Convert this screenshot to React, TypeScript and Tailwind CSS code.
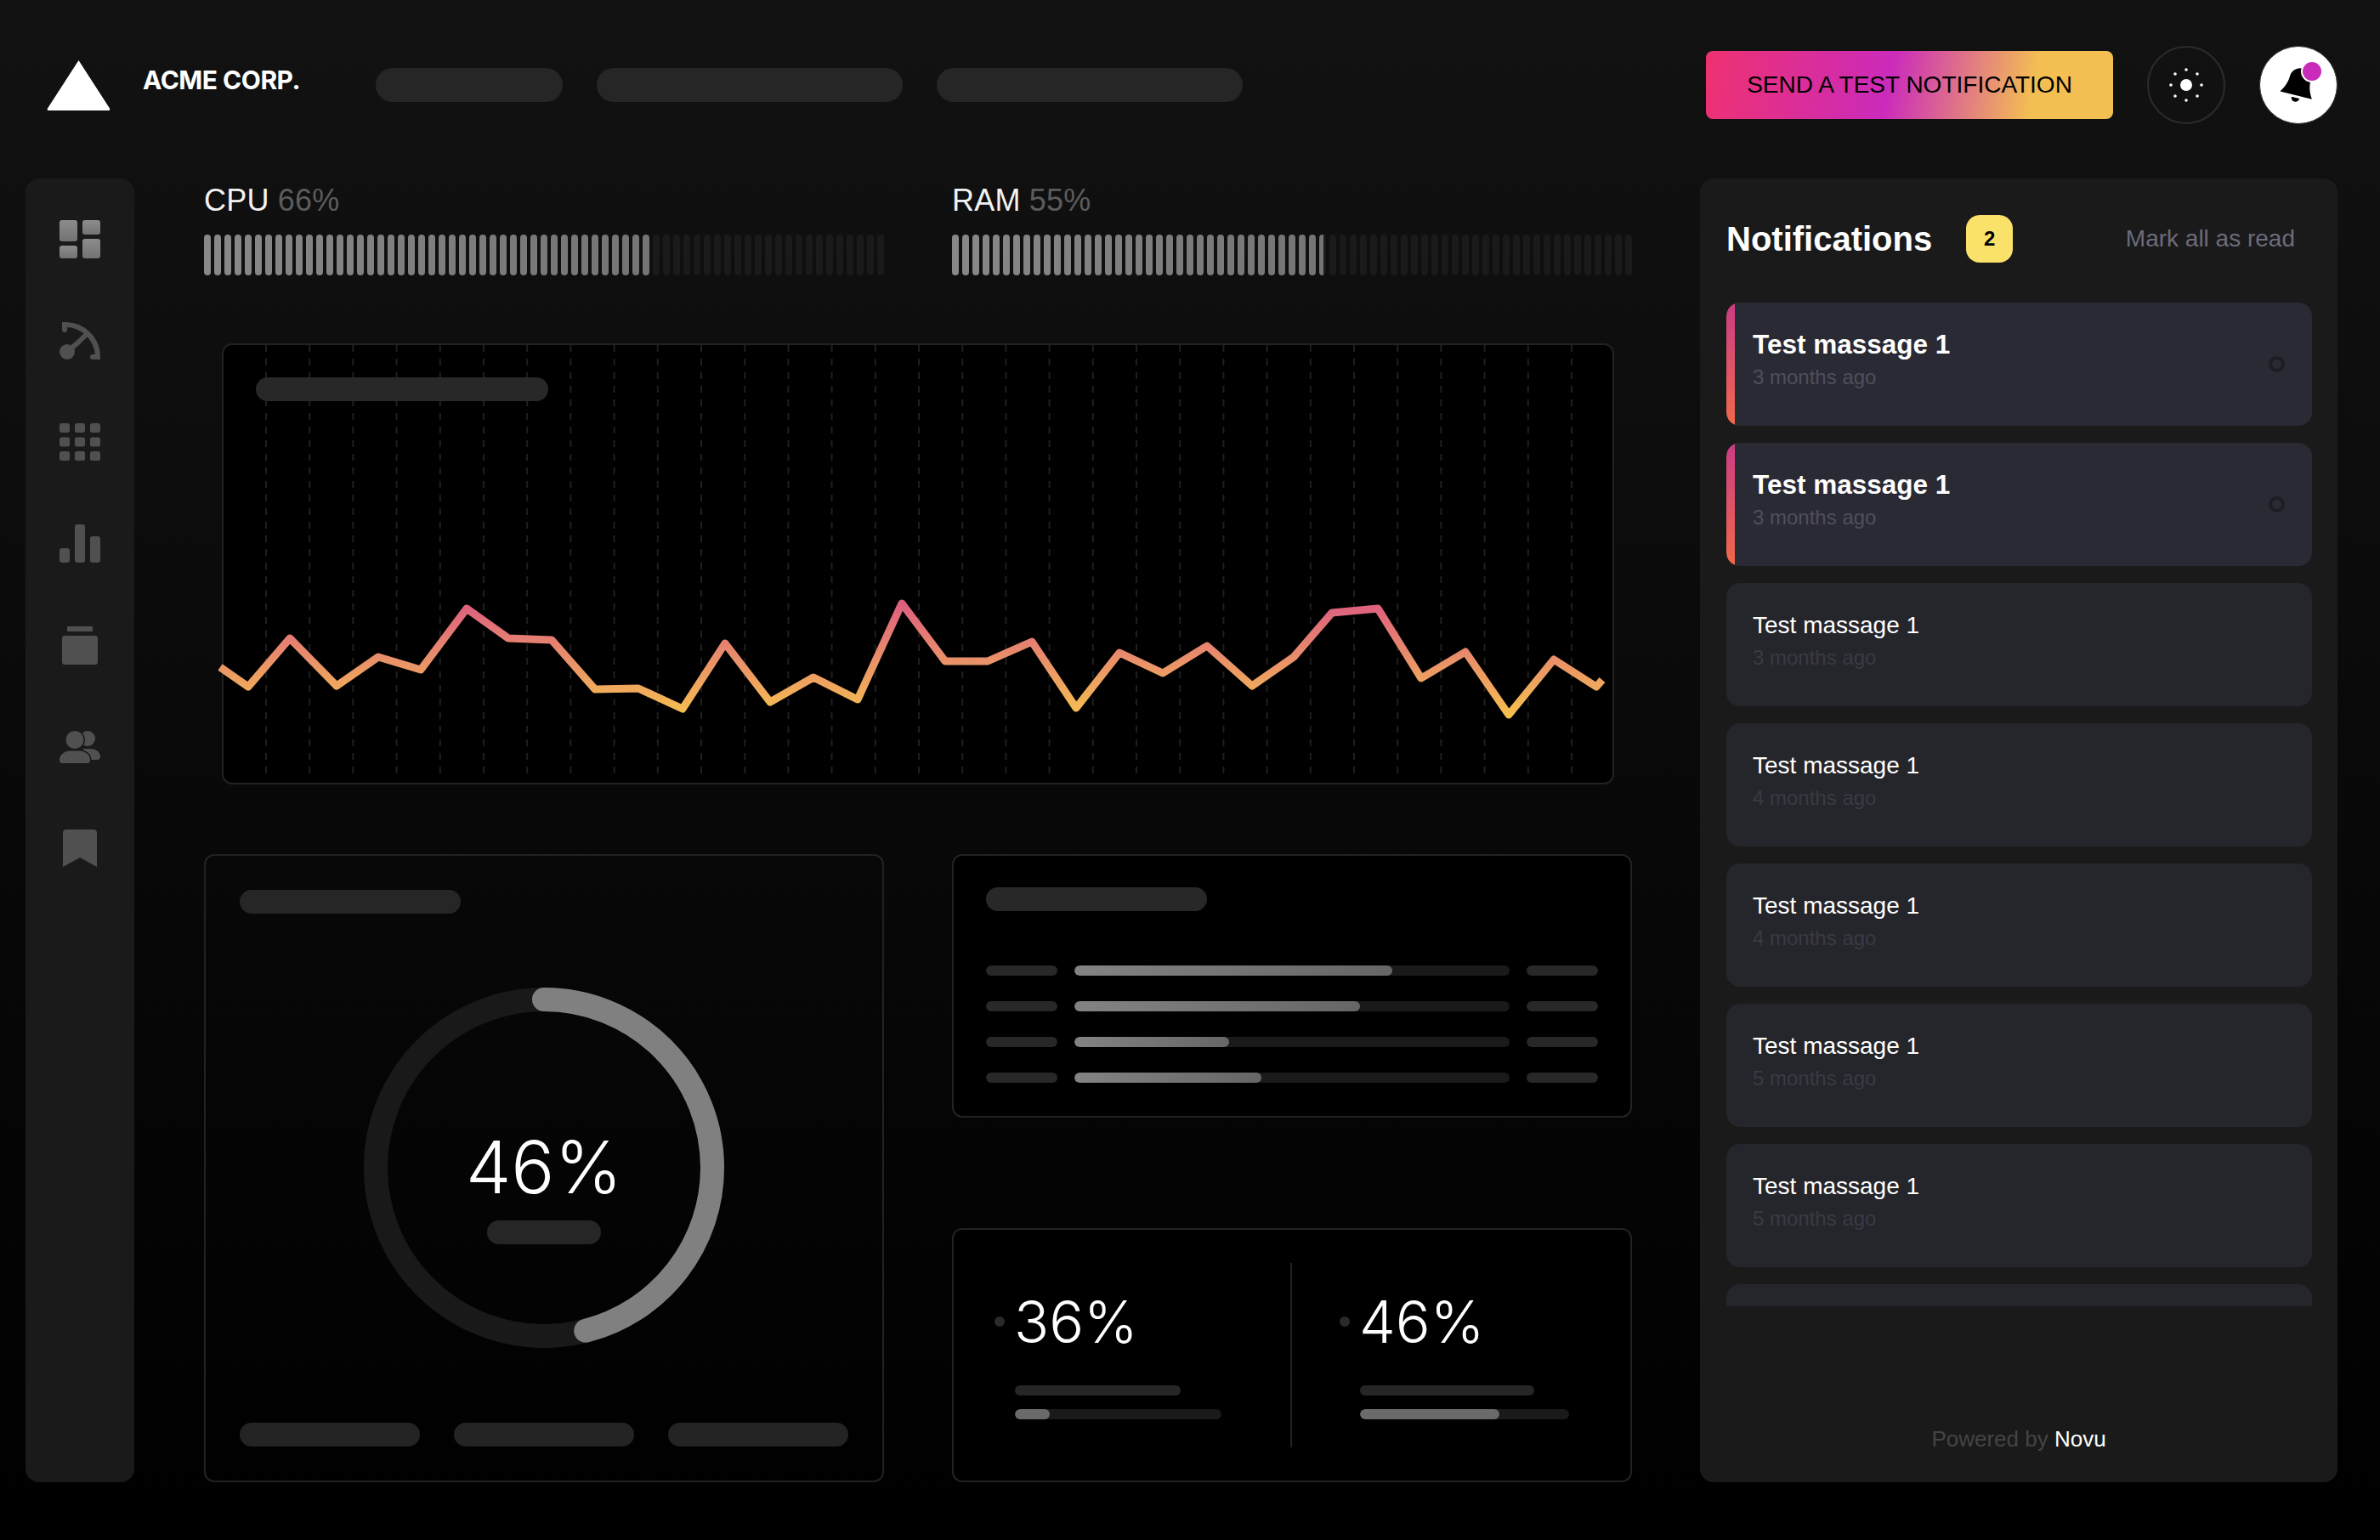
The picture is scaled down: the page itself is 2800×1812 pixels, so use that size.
import { ReactNode } from 'react';

const linePoints =
  '259,785 292,808 341,751 396,807 445,773 495,788 549,716 598,751 649,753 700,811 751,810 803,834 853,757 906,826 957,797 1009,823 1061,710 1112,778 1162,778 1214,755 1266,833 1317,768 1368,792 1420,760 1473,807 1522,773 1567,721 1621,716 1672,798 1724,767 1775,841 1828,776 1878,808 1885,800';

const rows = [73, 65.6, 35.5, 43];

const notifications = [
  { time: '3 months ago', unread: true },
  { time: '3 months ago', unread: true },
  { time: '3 months ago', unread: false },
  { time: '4 months ago', unread: false },
  { time: '4 months ago', unread: false },
  { time: '5 months ago', unread: false },
  { time: '5 months ago', unread: false },
];

// fillPx: how far the grey fill reaches along the strip, it can stop inside a tick
function Ticks({ fillPx }: { fillPx: number }) {
  const ticks = 67;
  return (
    <div className="flex gap-1 h-12 mt-5">
      {Array.from({ length: ticks }, (_, i) => {
        const width = Math.max(0, Math.min(8, fillPx - i * 12));
        const shade = Math.round(0x88 - ((i * 12) / fillPx) * 0x14);
        return (
          <div key={i} className="w-2 h-12 rounded-full bg-[#1a1a1a] overflow-hidden">
            {width > 0 && <div className="h-full" style={{ width, backgroundColor: `rgb(${shade},${shade},${shade})` }} />}
          </div>
        );
      })}
    </div>
  );
}

function Meter({ label, percent, fillPx }: { label: string; percent: number; fillPx: number }) {
  return (
    <div className="w-[800px]">
      <div className="text-[36px] leading-10 mt-[6px] tracking-[0.2px] text-[#f2f2f2]">
        {label} <span className="text-[#5c5c5c]">{percent}%</span>
      </div>
      <Ticks fillPx={fillPx} />
    </div>
  );
}

function SidebarIcons() {
  return (
    <div className="flex flex-col items-center gap-[75px] pt-[49px]">
      <svg width="48" height="45" viewBox="0 0 48 45">
        <defs>
          <linearGradient id="dash" x1="0" y1="0" x2="0" y2="1">
            <stop offset="0" stopColor="#8c8c8c" />
            <stop offset="1" stopColor="#737373" />
          </linearGradient>
        </defs>
        <g fill="url(#dash)">
          <rect x="0" y="0" width="21" height="25" rx="3" />
          <rect x="27" y="0" width="21" height="17" rx="3" />
          <rect x="0" y="30" width="21" height="15" rx="3" />
          <rect x="27" y="22" width="21" height="23" rx="3" />
        </g>
      </svg>
      <svg width="48" height="44" viewBox="0 0 48 44" fill="none" stroke="#505050" strokeWidth="6" strokeLinecap="round">
        <path d="M6 9V3A38 38 0 0 1 45 41H39" />
        <path d="M26 20 31 15" />
        <path d="M9 35 23 23" />
        <circle cx="9" cy="35" r="9" fill="#505050" stroke="none" />
      </svg>
      <svg width="48" height="44" viewBox="0 0 48 44" fill="#505050">
        {[0, 16.500, 33].map((y) =>
          [0, 18, 36].map((x) => <rect key={`${x}-${y}`} x={x} y={y} width="12" height="11" rx="2.500" />),
        )}
      </svg>
      <svg width="48" height="45" viewBox="0 0 48 45" fill="#505050">
        <rect x="0" y="28" width="12" height="17" rx="3" />
        <rect x="18" y="0" width="12" height="45" rx="3" />
        <rect x="36" y="14" width="12" height="31" rx="3" />
      </svg>
      <svg width="42" height="45" viewBox="0 0 42 45" fill="#505050">
        <rect x="6" y="0" width="30" height="6" />
        <rect x="0" y="11" width="42" height="34" rx="3" />
      </svg>
      <svg className="mt-[3px]" width="48" height="38" viewBox="0 0 48 38" fill="#505050">
        <circle cx="33" cy="9" r="9" />
        <path d="M28 21h8c7 0 12 4 12 9 0 3-2 4-4 4H30z" />
        <circle cx="18" cy="10.500" r="10.500" stroke="#1a1a1a" strokeWidth="3" paintOrder="stroke" />
        <path d="M0 34c0-6 6-10.500 13-10.500h10c7 0 13 4.500 13 10.500 0 3-1.500 4-3 4H3c-1.500 0-3-1-3-4z" stroke="#1a1a1a" strokeWidth="3" paintOrder="stroke" />
      </svg>
      <svg className="mt-[3px]" width="40" height="44" viewBox="0 0 40 44" fill="#505050">
        <path d="M0 4a4 4 0 0 1 4-4h32a4 4 0 0 1 4 4v40L20 33 0 44z" />
      </svg>
    </div>
  );
}

function SunIcon() {
  const dots: [number, number][] = [
    [0, -18], [13, -13], [18, 0], [13, 13], [0, 18], [-13, 13], [-18, 0], [-13, -13],
  ];
  return (
    <svg width="48" height="48" viewBox="-24 -24 48 48" fill="#fff">
      <circle r="7" />
      {dots.map(([x, y]) => (
        <circle key={`${x}-${y}`} cx={x} cy={y} r="1.800" />
      ))}
    </svg>
  );
}

function BellIcon() {
  return (
    <svg className="absolute left-[22px] top-[22px] rotate-[14deg]" width="46" height="48" viewBox="0 0 24 25" fill="#000">
      <path d="M12 1.500a6.500 6.500 0 0 0-6.500 6.500c0 6-3.500 10-3.500 10.500h20c0-.5-3.500-4.500-3.500-10.500A6.500 6.500 0 0 0 12 1.500z" />
      <path d="M9.500 20a2.500 2.500 0 0 0 5 0z" />
    </svg>
  );
}

function Card({ className, children }: { className: string; children: ReactNode }) {
  return <div className={`border-2 border-[#222222] rounded-xl ${className}`}>{children}</div>;
}

function StatColumn({ value, fill, pillW, barW, className }: { value: string; fill: number; pillW: string; barW: string; className: string }) {
  return (
    <div className={className}>
      <div className="flex items-center gap-[11px] mt-[33px]">
        <div className="w-3 h-3 rounded-full bg-[#2a2a2a]" />
        <div className="text-[68px] leading-[72px] text-white font-light [font-family:Inter,sans-serif]">{value}</div>
      </div>
      <div className={`ml-6 mt-[39px] h-3 rounded-full bg-[#262626] ${pillW}`} />
      <div className={`ml-6 mt-4 h-3 rounded-full bg-[#1a1a1a] overflow-hidden ${barW}`}>
        <div className="h-full rounded-full bg-[#6a6a6a]" style={{ width: `${fill}%` }} />
      </div>
    </div>
  );
}

export default function App() {
  return (
    <div className="w-[2800px] h-[1812px] overflow-hidden bg-[linear-gradient(180deg,#121212,#000000)] [font-family:'Liberation_Sans',Arial,sans-serif]">
      {/* top bar */}
      <header className="h-[200px] flex items-center pl-[55px] pr-[50px]">
        <div className="w-[387px] flex items-center gap-[38px]">
          <svg width="75" height="60" viewBox="0 0 75 60" fill="#fff">
            <path d="M37.500 1 74 57.500a1.500 1.500 0 0 1-1 2.500H2a1.500 1.500 0 0 1-1-2.500z" />
          </svg>
          <span className="text-[30px] leading-none font-bold text-white mb-3 tracking-[-0.5px] [font-family:Inter,sans-serif]">ACME CORP.</span>
        </div>
        <div className="flex gap-10">
          <div className="w-[220px] h-10 rounded-full bg-[#262626]" />
          <div className="w-[360px] h-10 rounded-full bg-[#262626]" />
          <div className="w-[360px] h-10 rounded-full bg-[#262626]" />
        </div>
        <button className="ml-auto w-[479px] h-20 rounded-lg text-[28px] text-black bg-[linear-gradient(100deg,#ee3170_0%,#cb2bbb_45%,#f4bf52_80%)]">
          SEND A TEST NOTIFICATION
        </button>
        <div className="ml-10 w-[92px] h-[92px] rounded-full border-2 border-[#2b2b2b] flex items-center justify-center">
          <SunIcon />
        </div>
        <div className="relative ml-10 w-[92px] h-[92px] rounded-full bg-white border border-[#333333]">
          <BellIcon />
          <div className="absolute left-12 top-4 w-[26px] h-[26px] rounded-full bg-[#cb2bbb] border-2 border-white" />
        </div>
      </header>

      <div className="flex mt-[10px] pl-[30px] h-[1534px]">
        <aside className="w-32 rounded-2xl bg-[#1a1a1a]">
          <SidebarIcons />
        </aside>

        <main className="w-[1680px] ml-[82px] mr-[80px] flex flex-col">
          <div className="flex justify-between">
            <Meter label="CPU" percent={66} fillPx={524} />
            <Meter label="RAM" percent={55} fillPx={436.700} />
          </div>

          <Card className="relative mt-20 mx-[21px] h-[519px] bg-black">
            <svg className="absolute inset-0 overflow-visible" width="1635" height="515" viewBox="263 406 1635 515" fill="none">
              <defs>
                <linearGradient id="line" gradientUnits="userSpaceOnUse" x1="0" y1="710" x2="0" y2="842">
                  <stop offset="0" stopColor="#de5f80" />
                  <stop offset="0.5" stopColor="#e9906a" />
                  <stop offset="1" stopColor="#f6c04f" />
                </linearGradient>
              </defs>
              {Array.from({ length: 31 }, (_, i) => (
                <line key={i} x1={313 + i * 51.2} x2={313 + i * 51.2} y1="406" y2="916" stroke="#1f1f1f" strokeWidth="2" strokeDasharray="8 8" />
              ))}
              <polyline points={linePoints} stroke="url(#line)" strokeWidth="9" strokeLinejoin="round" />
            </svg>
            <div className="relative ml-[38px] mt-[38px] w-[344px] h-7 rounded-full bg-[#282828]" />
          </Card>

          <div className="grid grid-cols-2 gap-x-20 mt-[82px] h-[739px]">
            <Card className="p-10 flex flex-col">
              <div className="w-[260px] h-7 rounded-full bg-[#262626]" />
              <div className="relative self-center w-[424px] h-[424px] mt-[87px] flex flex-col items-center pt-[168px]">
                <svg className="absolute inset-0 -rotate-90" width="424" height="424" viewBox="0 0 424 424" fill="none" strokeWidth="28">
                  <circle cx="212" cy="212" r="198" stroke="#191919" />
                  <circle cx="212" cy="212" r="198" stroke="#808080" strokeLinecap="round" pathLength="100" strokeDasharray="46 100" />
                </svg>
                <div className="text-[85px] leading-[88px] text-white font-light [font-family:Inter,sans-serif]">46%</div>
                <div className="mt-[18px] w-[134px] h-7 rounded-full bg-[#262626]" />
              </div>
              <div className="flex gap-10 mt-[88px]">
                <div className="w-[212px] h-7 rounded-full bg-[#242424]" />
                <div className="w-[212px] h-7 rounded-full bg-[#242424]" />
                <div className="w-[212px] h-7 rounded-full bg-[#242424]" />
              </div>
            </Card>

            <div className="flex flex-col justify-between">
              <Card className="h-[310px] bg-black px-[38px] pt-[37px]">
                <div className="w-[260px] h-7 rounded-full bg-[#282828]" />
                <div className="mt-16 flex flex-col gap-[30px]">
                  {rows.map((w) => (
                    <div key={w} className="flex gap-5">
                      <div className="w-[84px] h-3 rounded-full bg-[#282828]" />
                      <div className="w-[512px] h-3 rounded-full bg-[#1a1a1a] overflow-hidden">
                        <div className="h-3 rounded-full bg-[linear-gradient(90deg,#838383,#666666)]" style={{ width: `${w}%` }} />
                      </div>
                      <div className="w-[84px] h-3 rounded-full bg-[#282828]" />
                    </div>
                  ))}
                </div>
              </Card>

              <Card className="h-[299px] bg-black flex py-[39px]">
                <StatColumn className="w-[396px] pl-12" value="36%" fill={17} pillW="w-[195px]" barW="w-[243px]" />
                <div className="w-0.5 bg-[#222222]" />
                <StatColumn className="flex-1 pl-14" value="46%" fill={66.500} pillW="w-[205px]" barW="w-[246px]" />
              </Card>
            </div>
          </div>
        </main>

        {/* notification centre */}
        <section className="w-[750px] rounded-2xl bg-[#1a1a1a] flex flex-col">
          <div className="h-[142px] mb-1 flex items-center pl-[31px] pr-[50px]">
            <h2 className="text-[40px] leading-none font-bold text-white">Notifications</h2>
            <div className="ml-10 w-[55px] h-14 rounded-2xl bg-[#fae26a] flex items-center justify-center text-[24px] font-bold text-black">2</div>
            <span className="ml-auto text-[28px] text-[#6c6c7c]">Mark all as read</span>
          </div>
          <div className="flex flex-col gap-5 pl-[31px] pr-[30px]">
            {notifications.map((n, i) => (
              <div key={i} className={`h-[145px] rounded-2xl overflow-hidden flex ${n.unread ? 'bg-[#2a2a34]' : 'bg-[#25262b]'}`}>
                {n.unread && <div className="w-[10px] bg-[linear-gradient(180deg,#c93d84,#f0694a)]" />}
                <div className={`flex-1 ${n.unread ? 'pl-[21px] pt-[33px]' : 'pl-[31px] pt-[34px]'}`}>
                  <div className={`leading-8 text-white ${n.unread ? 'text-[31.5px] font-bold' : 'text-[28px]'}`}>Test massage 1</div>
                  <div className={`text-[24px] leading-7 ${n.unread ? 'mt-[9px] text-[#4f4f5b]' : 'mt-2 text-[#393a44]'}`}>{n.time}</div>
                </div>
                {n.unread && <div className="self-center mr-8 w-[19px] h-[19px] rounded-full border-4 border-[#1d1d24]" />}
              </div>
            ))}
            {/* next row is scrolled off, only its top edge shows */}
            <div className="h-[26px] rounded-t-2xl bg-[#25262b]" />
          </div>
          <div className="flex-1 flex items-end justify-center pb-[35px] text-[26px] leading-8 text-[#444444]">
            <span>
              Powered by <span className="text-white">Novu</span>
            </span>
          </div>
        </section>
      </div>
    </div>
  );
}
